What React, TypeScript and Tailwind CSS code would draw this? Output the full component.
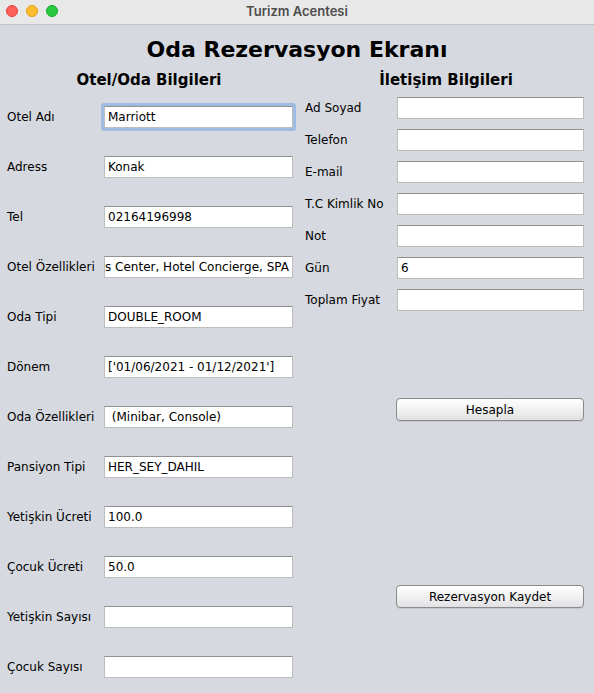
import type { ReactNode } from 'react';

const leftRows = [
  { label: 'Otel Adı', value: 'Marriott', focused: true },
  { label: 'Adress', value: 'Konak' },
  { label: 'Tel', value: '02164196998' },
  { label: 'Otel Özellikleri', value: 'ess Center, Hotel Concierge, SPA', clip: true },
  { label: 'Oda Tipi', value: 'DOUBLE_ROOM' },
  { label: 'Dönem', value: "['01/06/2021 - 01/12/2021']" },
  { label: 'Oda Özellikleri', value: ' (Minibar, Console)' },
  { label: 'Pansiyon Tipi', value: 'HER_SEY_DAHIL' },
  { label: 'Yetişkin Ücreti', value: '100.0' },
  { label: 'Çocuk Ücreti', value: '50.0' },
  { label: 'Yetişkin Sayısı', value: '' },
  { label: 'Çocuk Sayısı', value: '' },
];

const rightRows = [
  { label: 'Ad Soyad', value: '' },
  { label: 'Telefon', value: '' },
  { label: 'E-mail', value: '' },
  { label: 'T.C Kimlik No', value: '' },
  { label: 'Not', value: '' },
  { label: 'Gün', value: '6' },
  { label: 'Toplam Fiyat', value: '' },
];

function Field({ value, focused, clip, className }: { value: string; focused?: boolean; clip?: boolean; className: string }) {
  return (
    <div className={`${className} relative h-[22px] shrink-0`}>
      {focused && <div className="absolute -inset-[3px] rounded-[3px] border-[3px] border-[#9dbbe3]" />}
      <div className="relative h-full bg-white border border-[#bdbdbd] border-t-[#919191] overflow-hidden flex items-center whitespace-pre">
        <span className={clip ? 'absolute right-[3px]' : 'pl-[3px]'}>{value}</span>
      </div>
    </div>
  );
}

function MacButton({ children }: { children: ReactNode }) {
  return (
    <button className="w-[188px] h-[23px] ml-[98px] rounded-[4px] border border-[#8a8a8a] bg-gradient-to-b from-[#ffffff] via-[#f1f1f1] to-[#e2e2e6] text-[12px] text-black shadow-[0_1px_0_rgba(0,0,0,0.08)]">
      {children}
    </button>
  );
}

export default function App() {
  return (
    <div className="w-[594px] h-[693px] bg-[#d6d9df] text-black overflow-hidden" style={{ fontFamily: '"DejaVu Sans", sans-serif' }}>
      <div className="h-[25px] bg-[#e8e8e8] border-b border-[#c4c4c4] relative flex items-center justify-center">
        <div className="absolute left-[6px] top-[5px] flex gap-[8px]">
          <span className="w-[12px] h-[12px] rounded-full bg-[#fe5f57] border border-[#e2463f]" />
          <span className="w-[12px] h-[12px] rounded-full bg-[#febc2e] border border-[#e1a116]" />
          <span className="w-[12px] h-[12px] rounded-full bg-[#28c840] border border-[#14ae2a]" />
        </div>
        <span className="text-[13px] font-semibold text-[#4d4d4d]" style={{ fontFamily: 'Inter, sans-serif' }}>Turizm Acentesi</span>
      </div>

      <h1 className="mt-[11px] h-[28px] leading-[28px] text-center text-[22px] font-bold">Oda Rezervasyon Ekranı</h1>

      <div className="grid grid-cols-[298px_296px] text-[12px]">
        <div className="flex flex-col">
          <h2 className="h-[20px] mt-[6px] leading-[20px] text-center text-[15px] font-bold">Otel/Oda Bilgileri</h2>
          <div className="mt-[16px] flex flex-col gap-[28px]">
            {leftRows.map((r) => (
              <div key={r.label} className="flex items-center h-[22px]">
                <span className="w-[104px] shrink-0 pl-[7px] whitespace-nowrap">{r.label}</span>
                <Field value={r.value} focused={r.focused} clip={r.clip} className="w-[189px]" />
              </div>
            ))}
          </div>
        </div>

        <div className="flex flex-col">
          <h2 className="h-[20px] mt-[6px] leading-[20px] text-center text-[15px] font-bold">İletişim Bilgileri</h2>
          <div className="mt-[7px] flex flex-col gap-[10px]">
            {rightRows.map((r) => (
              <div key={r.label} className="flex items-center h-[22px]">
                <span className="w-[99px] shrink-0 pl-[7px] whitespace-nowrap">{r.label}</span>
                <Field value={r.value} className="w-[187px]" />
              </div>
            ))}
          </div>
          <div className="mt-[87px]">
            <MacButton>Hesapla</MacButton>
          </div>
          <div className="mt-[164px]">
            <MacButton>Rezervasyon Kaydet</MacButton>
          </div>
        </div>
      </div>
    </div>
  );
}
